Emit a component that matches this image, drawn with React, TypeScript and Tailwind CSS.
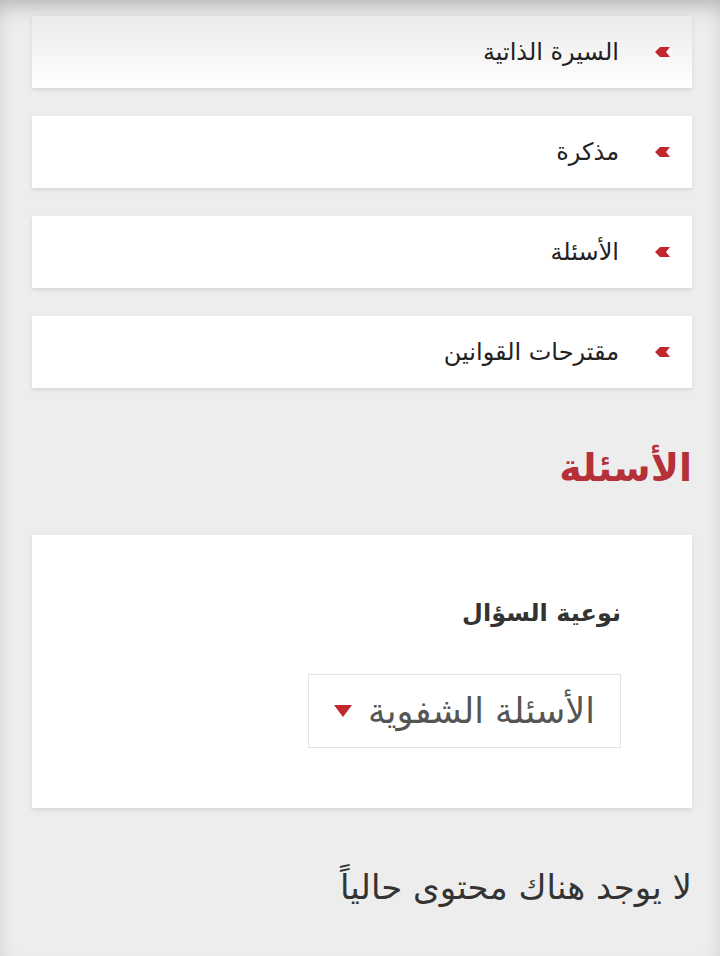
const links = ["السيرة الذاتية", "مذكرة", "الأسئلة", "مقترحات القوانين"];

const Arrow = () => (
  <svg width="15" height="10" viewBox="0 0 15 10" className="shrink-0">
    <polygon points="0,5 5,0 15,0 11,5 15,10 5,10" fill="#c1272d" />
  </svg>
);

const App = () => {
  return (
    <div
      dir="rtl"
      className="min-h-[956px] bg-[#ededed] shadow-[inset_0_12px_22px_-8px_rgba(0,0,0,0.28)] pt-4 pr-7 pl-8 pb-10"
      style={{ fontFamily: '"DejaVu Sans", "Noto Sans", sans-serif' }}
    >
      <div className="flex flex-col gap-7">
        {links.map((label, i) => (
          <div
            key={label}
            className={`h-[72px] flex items-center gap-[36px] pr-[22px] shadow-[0_2px_4px_rgba(0,0,0,0.1)] ${
              i === 0 ? "bg-gradient-to-b from-[#ebebeb] to-white" : "bg-white"
            }`}
          >
            <Arrow />
            <span className="text-[24px] text-[#222]">{label}</span>
          </div>
        ))}
      </div>

      <h2 className="mt-[61px] text-[38px] font-bold text-[#b5313a] leading-none">الأسئلة</h2>

      <div className="mt-[48px] bg-white shadow-[0_2px_5px_rgba(0,0,0,0.1)] h-[273px] pt-[60px] pr-[71px]">
        <div className="text-[24px] font-bold text-[#333]">نوعية السؤال</div>
        <div className="mt-[43px] w-[313px] h-[74px] border border-[#e4e4e4] flex items-center gap-4 pr-[25px]">
          <span className="text-[35px] text-[#555]">الأسئلة الشفوية</span>
          <svg width="18" height="12" viewBox="0 0 18 12" className="shrink-0">
            <polygon points="0,0 18,0 9,12" fill="#c1272d" />
          </svg>
        </div>
      </div>

      <p className="mt-[54px] text-[34px] text-[#333]">لا يوجد هناك محتوى حالياً</p>
    </div>
  );
};

export default App;
